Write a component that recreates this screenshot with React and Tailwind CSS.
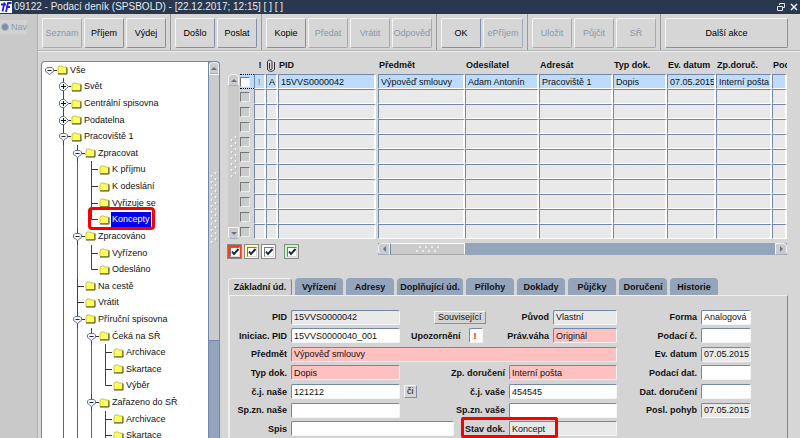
import React, { useState } from 'react';

const toolbar = [
    { id: 'list', items: [['Seznam', false], ['Příjem', true], ['Výdej', true]] },
    { id: 'mail', items: [['Došlo', true], ['Poslat', true]] },
    { id: 'flow', items: [['Kopie', true], ['Předat', false], ['Vrátit', false], ['Odpověď', false]] },
    { id: 'confirm', items: [['OK', true], ['ePříjem', false]] },
    { id: 'store', items: [['Uložit', false], ['Půjčit', false], ['SŘ', false]] },
];

// kind: open / closed / leaf / last
const tree = [
    { level: 0, kind: 'open', label: 'Vše' },
    { level: 1, kind: 'closed', label: 'Svět' },
    { level: 1, kind: 'closed', label: 'Centrální spisovna' },
    { level: 1, kind: 'closed', label: 'Podatelna' },
    { level: 1, kind: 'open', label: 'Pracoviště 1' },
    { level: 2, kind: 'open', label: 'Zpracovat' },
    { level: 3, kind: 'leaf', label: 'K příjmu' },
    { level: 3, kind: 'leaf', label: 'K odeslání' },
    { level: 3, kind: 'leaf', label: 'Vyřizuje se' },
    { level: 3, kind: 'last', label: 'Koncepty' },
    { level: 2, kind: 'open', label: 'Zpracováno' },
    { level: 3, kind: 'leaf', label: 'Vyřízeno' },
    { level: 3, kind: 'last', label: 'Odesláno' },
    { level: 2, kind: 'leaf', label: 'Na cestě' },
    { level: 2, kind: 'leaf', label: 'Vrátit' },
    { level: 2, kind: 'open', label: 'Příruční spisovna' },
    { level: 3, kind: 'open', label: 'Čeká na SŘ' },
    { level: 4, kind: 'leaf', label: 'Archivace' },
    { level: 4, kind: 'leaf', label: 'Skartace' },
    { level: 4, kind: 'last', label: 'Výběr' },
    { level: 3, kind: 'open', label: 'Zařazeno do SŘ' },
    { level: 4, kind: 'leaf', label: 'Archivace' },
    { level: 4, kind: 'leaf', label: 'Skartace' },
];

const columns = [
    { key: 'pid', label: 'PID', width: 'w-[100px]' },
    { key: 'subject', label: 'Předmět', width: '' },
    { key: 'sender', label: 'Odesílatel', width: 'w-[74px]' },
    { key: 'addressee', label: 'Adresát', width: 'w-[74px]' },
    { key: 'type', label: 'Typ dok.', width: 'w-[54px]' },
    { key: 'date', label: 'Ev. datum', width: 'w-[49px]' },
    { key: 'delivery', label: 'Zp.doruč.', width: 'w-[56px]' },
    { key: 'filing', label: 'Pod', width: 'w-[15px]' },
];

const record = {
    pid: '15VVS0000042',
    subject: 'Výpověď smlouvy',
    sender: 'Adam Antonín',
    addressee: 'Pracoviště 1',
    type: 'Dopis',
    date: '07.05.2015',
    delivery: 'Interní pošta',
};

const rows = [record, {}, {}, {}, {}, {}, {}, {}, {}, {}, {}];

const tabs = [
    ['Základní úd.', 'w-[64px]'],
    ['Vyřízení', 'w-12'],
    ['Adresy', 'w-12'],
    ['Doplňující úd.', 'w-[66px]'],
    ['Přílohy', 'w-12'],
    ['Doklady', 'w-12'],
    ['Půjčky', 'w-12'],
    ['Doručení', 'w-12'],
    ['Historie', 'w-12'],
];

const bevel = 'border border-t-[#f4f4f4] border-l-[#f4f4f4] border-r-[#7f90ab] border-b-[#7f90ab]';
const sunken = 'border border-t-[#7388a8] border-l-[#7388a8] border-r-[#f6f6f6] border-b-[#f6f6f6]';

function Guide() {
    return (
        <svg width="14" height="17" className="flex-none overflow-visible">
            <path d="M7.5 0V17" stroke="#666" />
        </svg>
    );
}

function Node({ kind, level }) {
    return (
        <svg width="14" height="17" className="flex-none overflow-visible" fill="none">
            {level > 0 && <path d={kind === 'last' ? 'M7.5 0V8.5' : 'M7.5 0V17'} stroke="#444" />}
            {(kind === 'leaf' || kind === 'last') && <path d="M7.5 8.5H14" stroke="#333" />}
            {kind === 'open' && (
                <>
                    <path d="M11 8.5H15" stroke="#333" />
                    <path d="M5 5.5H10L11.5 7V9.5L8.5 11.500L7.5 13L6.5 11.500L3.500 9.5V7Z" fill="#f3f6fa" stroke="#64758f" strokeLinejoin="round" />
                    <path d="M5.5 8.5H9.5" stroke="#222" />
                </>
            )}
            {kind === 'closed' && (
                <>
                    <path d="M12 8.5H15" stroke="#333" />
                    <path d="M5.5 4.5H8.5L10.500 6.5L12.500 8.5L10.500 10.500L8.5 12.500H5.5L3.500 10.500V6.5Z" fill="#f3f6fa" stroke="#64758f" strokeLinejoin="round" />
                    <path d="M5 8.5H10M7.5 6V11" stroke="#111" />
                </>
            )}
        </svg>
    );
}

function Folder() {
    return (
        <svg width="11" height="10" className="ml-px mr-px flex-none">
            <path d="M1 3L2 1H5L6 2H9.500V8.500H1Z" fill="#ffff5c" stroke="#b8b040" strokeWidth="0.800" />
            <path d="M1 9H10V2.500" fill="none" stroke="#4d4b18" />
        </svg>
    );
}

function ArrowButton({ dir }) {
    const shapes = { up: 'M2 7L5 4L8 7Z', down: 'M2 4L5 7L8 4Z', left: 'M7 2V8L4 5Z', right: 'M4 2V8L7 5Z' };
    const rounding = { up: 'rounded-t', down: 'rounded-b', left: 'rounded-l', right: 'rounded-r' };
    return (
        <button
            type="button"
            aria-label={dir}
            className={`flex h-3 w-full max-w-3 flex-none items-center justify-center border border-[#f2f2f2] border-b-[#a3aec0] bg-[#cbcbcb] ${rounding[dir]}`}
        >
            <svg width="10" height="10" className="flex-none"><path d={shapes[dir]} fill="#5f7391" /></svg>
        </button>
    );
}

function Grip({ rows: count }) {
    return (
        <svg width="8" height={count * 6} fill="#f8f8f8">
            {Array.from({ length: count }, (_, i) => (
                <g key={i}>
                    <circle cx="5.500" cy={i * 6 + 1} r="0.900" />
                    <circle cx="1.500" cy={i * 6 + 4} r="0.900" />
                    <circle cx="6.500" cy={i * 6 + 2} r="0.500" fill="#999" />
                    <circle cx="2.500" cy={i * 6 + 5} r="0.500" fill="#999" />
                </g>
            ))}
        </svg>
    );
}

function TreePanel() {
    const [selected, setSelected] = useState(9);

    return (
        <div className="mt-[9px] flex w-[179px] flex-none overflow-hidden rounded-t-sm border border-b-0 border-[#7388a8] bg-white">
            <ul className="flex h-[382px] flex-1 flex-col">
                {tree.map((item, index) => (
                    <li key={index} className="flex min-h-0 flex-1 items-center">
                        {item.level > 0 && <span className="w-3.5 flex-none" />}
                        {Array.from({ length: Math.max(item.level - 1, 0) }, (_, i) => <Guide key={i} />)}
                        <div className="relative flex items-center">
                            <Node kind={item.kind} level={item.level} />
                            <Folder />
                            <button
                                type="button"
                                onClick={() => setSelected(index)}
                                className={`h-[15px] whitespace-nowrap px-px leading-[15px] ${selected === index ? 'bg-[#0000f0] text-white' : ''}`}
                            >
                                {item.label}
                            </button>
                            {item.label === 'Koncepty' && (
                                <span className="pointer-events-none absolute -top-1 -right-1 -bottom-0.5 left-1 rounded-sm border-[3px] border-[#f80000]" />
                            )}
                        </div>
                    </li>
                ))}
            </ul>
            <div className="flex w-[11px] flex-col border-l border-[#7388a8] bg-[#93a4bb]">
                <ArrowButton dir="up" />
                <div className="flex h-[267px] items-center justify-center border-t border-b border-t-white border-b-[#7388a8] bg-[#cbcbcb]">
                    <Grip rows={12} />
                </div>
            </div>
        </div>
    );
}

function Cell({ value, active, className = '' }) {
    return (
        <td className="p-0">
            <div className={`h-[15px] overflow-hidden whitespace-nowrap border border-r-2 border-t-[#7388a8] border-l-[#7388a8] border-r-white border-b-white pl-0.5 leading-[14px] ${active ? 'bg-[#bddcfb]' : 'bg-[#e9e9e9]'} ${className}`}>
                {value}
            </div>
        </td>
    );
}

function RecordTable() {
    return (
        <div className="flex pl-2 pr-[13px]">
            <div className="mt-[22px] flex w-[11px] flex-none flex-col bg-[#cbcbcb]">
                <ArrowButton dir="up" />
                <div className="flex flex-1 items-center justify-center"><Grip rows={7} /></div>
                <ArrowButton dir="down" />
            </div>
            <table className="ml-px w-full table-fixed border-collapse">
                <thead>
                    <tr className="h-[22px] text-left">
                        <th className="w-3.5 p-0" />
                        <th className="w-3 p-0 pt-1 text-center">!</th>
                        <th className="w-3 p-0 pt-1">
                            <svg width="10" height="13" viewBox="0 0 10 13" fill="none" stroke="#333">
                                <path d="M3.500 4V9.500C3.500 11 6 11 6 9.500V3C6 0.500 1.500 0.500 1.500 3V10C1.500 13 8.500 13 8.500 10V3" />
                            </svg>
                        </th>
                        {columns.map((col) => (
                            <th key={col.key} className={`overflow-hidden whitespace-nowrap p-0 pt-1 pl-px ${col.width}`}>{col.label}</th>
                        ))}
                    </tr>
                </thead>
                <tbody>
                    {rows.map((row, index) => {
                        const active = index === 0;
                        return (
                            <tr key={index}>
                                <td className="p-0">
                                    <div className={`flex h-[15px] items-center ${active ? 'border-y border-dotted border-black bg-[#bddcfb]' : ''}`}>
                                        <input
                                            type="checkbox"
                                            aria-label={`Řádek ${index + 1}`}
                                            className={`size-2.5 appearance-none border border-t-[#777] border-l-[#777] border-r-[#eee] border-b-[#eee] ${active ? 'bg-white' : 'bg-[#cbcbcb]'}`}
                                        />
                                    </div>
                                </td>
                                <Cell active={active} value={active ? '!' : ''} className="pl-[3px] text-[#e0407a]" />
                                <Cell active={active} value={active ? 'A' : ''} />
                                {columns.map((col) => (
                                    <Cell key={col.key} active={active} value={row[col.key]} className={col.key === 'pid' ? 'mr-0.5' : ''} />
                                ))}
                            </tr>
                        );
                    })}
                </tbody>
            </table>
        </div>
    );
}

function Filter({ label, color }) {
    return (
        <label className={`grid size-[15px] place-items-center border border-[#8a8a8a] ${color}`}>
            <input type="checkbox" defaultChecked aria-label={label} className="peer size-2.5 appearance-none border border-[#777] border-r-[#ddd] border-b-[#ddd] bg-white [grid-area:1/1]" />
            <svg width="10" height="10" className="pointer-events-none hidden [grid-area:1/1] peer-checked:block" fill="none">
                <path d="M2 4.500L4 7L8.500 2" stroke="#1d2a40" strokeWidth="2" />
            </svg>
        </label>
    );
}

function FilterBar() {
    return (
        <div className="flex pt-1 pl-[7px] pr-[13px]">
            <div className="flex w-[151px] flex-none gap-0.5 pt-px">
                <Filter label="Červená" color="bg-[#f84010]" />
                <Filter label="Žlutá" color="bg-[#ffff90]" />
                <Filter label="Bílá" color="bg-white" />
                <span className="w-1" />
                <Filter label="Zelená" color="bg-[#b8ffb8]" />
            </div>
            <div className="flex h-3 flex-1 bg-[#93a4bb]">
                <div className="w-3"><ArrowButton dir="left" /></div>
                <div className="flex w-[75px] items-center justify-center border border-l-[#7388a8] border-t-white border-r-white border-b-[#aaa] bg-[#cbcbcb]">
                    <svg width="24" height="8" fill="#f8f8f8">
                        {[0, 1, 2, 3].map((i) => (
                            <g key={i}>
                                <circle cx={i * 6 + 4} cy="2" r="0.900" />
                                <circle cx={i * 6 + 1} cy="6" r="0.900" />
                            </g>
                        ))}
                    </svg>
                </div>
                <div className="ml-auto w-3"><ArrowButton dir="right" /></div>
            </div>
        </div>
    );
}

function Field({ id, label, value = '', tone = 'bg-white', labelClass = '', inputClass = '' }) {
    return (
        <>
            <label htmlFor={id} className={`whitespace-nowrap text-right font-bold ${labelClass}`}>{label}</label>
            <input
                id={id}
                type="text"
                defaultValue={value}
                className={`h-[15px] min-w-0 rounded-xs pl-0.5 outline-none ${sunken} ${tone} ${inputClass}`}
            />
        </>
    );
}

function DetailForm() {
    const row = 'flex items-center gap-1';
    const first = 'w-[57px] flex-none';
    const pink = 'bg-[#ffc0c0]';
    const gray = 'bg-[#e9e9e9]';

    return (
        <form className="flex pt-3 pr-9">
            <div className="grid h-[130px] flex-1 auto-rows-fr">
                <div className={row}>
                    <Field id="pid" label="PID" value="15VVS0000042" tone={gray} labelClass={first} inputClass="w-[109px]" />
                    <button type="button" className={`ml-[30px] h-[13px] px-[3px] leading-[11px] ${bevel}`}>Související</button>
                    <span className="flex-1" />
                    <Field id="origin" label="Původ" value="Vlastní" tone={gray} inputClass="w-16" />
                </div>
                <div className={row}>
                    <Field id="initPid" label="Iniciac. PID" value="15VVS0000040_001" labelClass={first} inputClass="w-[109px]" />
                    <Field id="warning" label="Upozornění" value="!" labelClass="ml-[7px]" inputClass="ml-1 w-3.5 pl-1 font-bold text-red-600" />
                    <span className="flex-1" />
                    <Field id="legal" label="Práv.váha" value="Originál" tone={pink} inputClass="w-16" />
                </div>
                <div className={row}>
                    <Field id="subject" label="Předmět" value="Výpověď smlouvy" tone={pink} labelClass={first} inputClass="flex-1" />
                </div>
                <div className={row}>
                    <Field id="docType" label="Typ dok." value="Dopis" tone={pink} labelClass={first} inputClass="w-[109px]" />
                    <span className="flex-1" />
                    <Field id="delivery" label="Zp. doručení" value="Interní pošta" tone={pink} inputClass="w-[108px]" />
                </div>
                <div className={row}>
                    <Field id="ourRef" label="č.j. naše" value="121212" labelClass={first} inputClass="w-[109px]" />
                    <button type="button" className={`h-[13px] px-0.5 leading-[11px] ${bevel}`}>či</button>
                    <span className="flex-1" />
                    <Field id="yourRef" label="č.j. vaše" value="454545" inputClass="w-[108px]" />
                </div>
                <div className={row}>
                    <Field id="ourFile" label="Sp.zn. naše" labelClass={first} inputClass="w-[109px]" />
                    <span className="flex-1" />
                    <Field id="yourFile" label="Sp.zn. vaše" inputClass="w-[108px]" />
                </div>
                <div className={row}>
                    <Field id="file" label="Spis" labelClass={first} inputClass="w-[163px]" />
                    <span className="flex-1" />
                    <div className="relative flex items-center gap-1">
                        <Field id="state" label="Stav dok." value="Koncept" tone={gray} inputClass="w-[108px]" />
                        <span className="pointer-events-none absolute -top-1 -bottom-0.5 -left-1 right-[59px] rounded-xs border-[3px] border-[#f80000]" />
                    </div>
                </div>
            </div>
            <div className="grid h-[130px] w-[134px] flex-none auto-rows-fr">
                {[
                    ['form', 'Forma', 'Analogová', 'bg-white'],
                    ['filingNo', 'Podací č.', '', 'bg-white'],
                    ['evDate', 'Ev. datum', '07.05.2015', gray],
                    ['filingDate', 'Podací dat.', '', 'bg-white'],
                    ['delDate', 'Dat. doručení', '', 'bg-white'],
                    ['lastMove', 'Posl. pohyb', '07.05.2015', gray],
                ].map(([id, label, value, tone]) => (
                    <div key={id} className={row}>
                        <Field id={id} label={label} value={value} tone={tone} labelClass="flex-1" inputClass="w-[50px]" />
                    </div>
                ))}
                <span />
            </div>
        </form>
    );
}

function Detail() {
    const [active, setActive] = useState('Základní úd.');

    return (
        <div className="flex min-h-0 flex-1 flex-col pt-[19px] pl-2 pr-3">
            <div className="flex gap-[3px]">
                {tabs.map(([label, width]) => (
                    <button
                        key={label}
                        type="button"
                        onClick={() => setActive(label)}
                        className={`h-[17px] whitespace-nowrap rounded-t text-center font-bold ${width} ${active === label ? 'border border-b-0 border-[#f0f0f0] border-r-[#7388a8] bg-[#d0d0d0]' : 'bg-[#93a4bb]'}`}
                    >
                        {label}
                    </button>
                ))}
            </div>
            <div className="flex-1 border border-b-0 border-t-[#f0f0f0] border-l-[#f0f0f0] border-r-[#7388a8] border-l-2 bg-[#d4d4d4]">
                <DetailForm />
            </div>
        </div>
    );
}

function ToolButton({ label, enabled = true, className = '' }) {
    return (
        <button
            type="button"
            disabled={!enabled}
            className={`h-[30px] whitespace-nowrap rounded-xs border border-t-[#f4f4f4] border-l-[#f4f4f4] text-center ${enabled ? 'border-r-[#7f90ab] border-b-[#7f90ab] text-black' : 'border-r-[#9dabc0] border-b-[#9dabc0] text-[#8797ae]'} ${className}`}
        >
            {label}
        </button>
    );
}

function App() {
    return (
        <div className="flex h-screen flex-col overflow-hidden bg-[#d6d6d6] font-['Liberation_Sans',Arial,sans-serif] text-[9px] leading-3 text-[#111]">
            <header className="flex h-3.5 flex-none items-center bg-[#29384f] text-[10px] text-[#e6e9ee]">
                <svg width="12" height="12" className="mr-0.5 flex-none">
                    <rect width="12" height="12" fill="#fff" />
                    <path d="M1 3.500H6M4.500 1.500L2.500 10.500M11.500 2H8L6 11M6 6H10" stroke="#2020d8" strokeWidth="1.800" fill="none" />
                </svg>
                <h1>09122 - Podací deník (SPSBOLD) - [22.12.2017; 12:15] [ ] [ ]</h1>
                <div className="ml-auto flex items-center gap-1 pr-0.5">
                    <button type="button" aria-label="Obnovit">
                        <svg width="10" height="10" fill="none" stroke="#dfe3ea"><path d="M3.500 3V1.500H8.500V5.500H7M1.500 4.500H6.500V8.500H1.500Z" /></svg>
                    </button>
                    <button type="button" aria-label="Zavřít">
                        <svg width="8" height="8" stroke="#eef0f4" strokeWidth="1.500"><path d="M1 1L7 7M7 1L1 7" /></svg>
                    </button>
                </div>
            </header>

            <div className="flex min-h-0 flex-1">
                <nav className="w-[38px] flex-none border-r border-[#a7b0bd] bg-[#c9c9c9] pt-1.5">
                    <label className="flex h-[14px] w-[27px] items-center gap-0.5 bg-[#d2d2d2] pl-px text-[#8797ae]">
                        <input type="radio" name="nav" className="size-2 appearance-none rounded-full border border-[#a9b3c2] bg-[#7d8ea8]" />
                        Nav
                    </label>
                </nav>

                <div className="flex min-w-0 flex-1 flex-col">
                    <div className="flex h-[37px] flex-none border-b border-[#b4b4b4] pl-1">
                        {toolbar.map((group) => (
                            <div key={group.id} className="mr-1 flex gap-0.5 border-r border-[#9a9a9a] pt-1 pr-1">
                                {group.items.map(([label, enabled]) => (
                                    <ToolButton key={label} label={label} enabled={enabled} className="w-10" />
                                ))}
                            </div>
                        ))}
                        <div className="flex-1 pt-1 pr-3">
                            <ToolButton label="Další akce" className="w-full" />
                        </div>
                    </div>

                    <div className="flex min-h-0 flex-1 border-t border-[#eeeeee] pl-[3px]">
                        <TreePanel />
                        <main className="flex min-w-0 flex-1 flex-col">
                            <RecordTable />
                            <FilterBar />
                            <Detail />
                        </main>
                    </div>
                </div>
            </div>
        </div>
    );
}

export default App;
